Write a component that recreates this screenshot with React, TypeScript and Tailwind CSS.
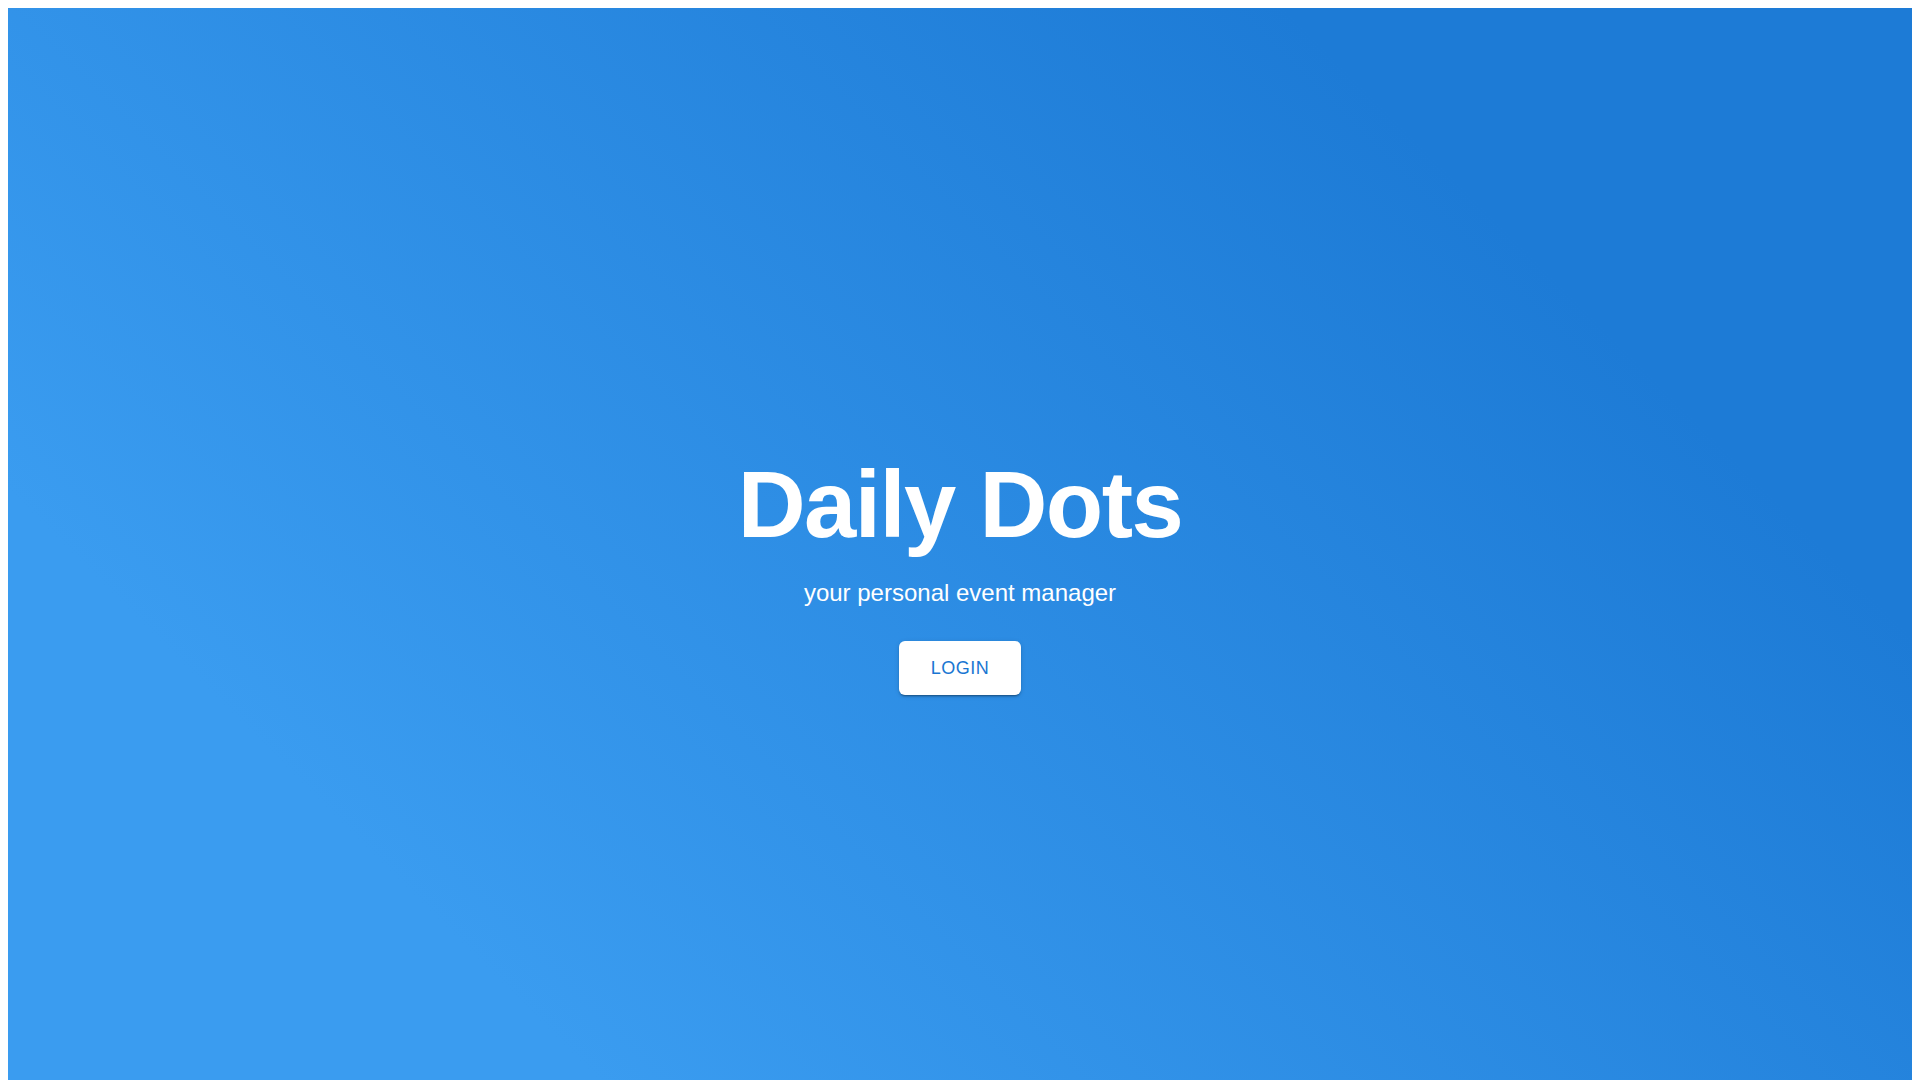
export default function App() {
  return (
    <div className="m-2 h-screen bg-[linear-gradient(45deg,#3a9cf0_20%,#1d7bd6_79%)] font-['Liberation_Sans',Arial,sans-serif]">
      <div className="flex h-full flex-col items-center justify-center pt-[48px] text-center">
        <h1 className="text-[94px] font-bold leading-[112px] tracking-[-1.5px] text-white">
          Daily Dots
        </h1>
        <p className="mt-4 text-[24px] leading-[32px] text-white">
          your personal event manager
        </p>
        <button className="mt-8 flex h-[54px] w-[122px] items-center justify-center rounded-md bg-white text-[18px] uppercase tracking-[0.5px] text-[#1976d2] shadow-[0px_3px_1px_-2px_rgba(0,0,0,0.2),0px_2px_2px_0px_rgba(0,0,0,0.14),0px_1px_5px_0px_rgba(0,0,0,0.12)]">
          Login
        </button>
      </div>
    </div>
  );
}
